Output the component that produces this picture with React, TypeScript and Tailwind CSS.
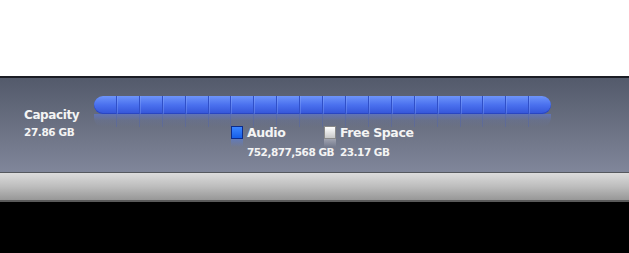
export default function App() {
  const segments = Array.from({ length: 20 }, (_, i) => i);

  return (
    <div className="w-[629px] h-[253px] bg-black flex flex-col font-['DejaVu_Sans',sans-serif]">
      {/* top white area */}
      <div className="h-[76px] bg-white" />

      {/* capacity panel */}
      <div className="h-[96px] border-t-2 border-[#1b1d24] bg-gradient-to-b from-[#535a6b] via-[#6a7082] to-[#80869a] flex pl-[24px]">
        <div className="w-[70px] pt-[30px] text-[#f4f4f4] font-bold">
          <div className="text-[12px] leading-[14px] tracking-[-0.4px]">Capacity</div>
          <div className="text-[10.5px] leading-[13px] mt-[4px] tracking-[-0.4px]">27.86 GB</div>
        </div>

        <div className="w-[457px] pt-[18px] flex flex-col">
          {/* bar */}
          <div className="h-[18px] rounded-full overflow-hidden flex bg-gradient-to-b from-[#6e94fa] via-[#4a70ee] to-[#3454d8] shadow-[inset_0_-1px_0_#2a46c0]">
            {segments.map((i) => (
              <div
                key={i}
                className={
                  i < 19
                    ? "flex-1 border-r border-[#3050c8] shadow-[1px_0_0_rgba(150,180,255,0.3)]"
                    : "flex-1"
                }
              />
            ))}
          </div>

          {/* reflection */}
          <div className="h-[13px] rounded-b-[9px] overflow-hidden flex bg-gradient-to-b from-[#6078d0]/70 via-[#6a78a8]/25 to-transparent">
            {segments.map((i) => (
              <div
                key={i}
                className={i < 19 ? "flex-1 border-r border-[#4a60b8]/35" : "flex-1"}
              />
            ))}
          </div>

          {/* legend */}
          <div className="flex ml-[137px] -mt-[1px] text-[#f4f4f4] font-bold">
            <div className="flex w-[93px]">
              <div className="flex flex-col mr-[4px]">
                <div className="w-[12px] h-[13px] border border-[#0c2c8c] bg-gradient-to-b from-[#3d86ff] to-[#155ee8]" />
                <div className="w-[12px] h-[8px] bg-gradient-to-b from-[#5a7ed8]/60 to-transparent" />
              </div>
              <div className="whitespace-nowrap">
                <div className="text-[12.5px] leading-[14px] tracking-[-0.4px]">Audio</div>
                <div className="text-[10.5px] leading-[13px] mt-[6px] tracking-[-0.5px]">752,877,568 GB</div>
              </div>
            </div>
            <div className="flex">
              <div className="flex flex-col mr-[4px]">
                <div className="w-[12px] h-[13px] border border-[#8a8a8a] bg-gradient-to-b from-[#ffffff] to-[#c8c8c8]" />
                <div className="w-[12px] h-[8px] bg-gradient-to-b from-[#d0d0d8]/50 to-transparent" />
              </div>
              <div className="whitespace-nowrap">
                <div className="text-[12.5px] leading-[14px] tracking-[-0.4px]">Free Space</div>
                <div className="text-[10.5px] leading-[13px] mt-[6px] tracking-[-0.5px]">23.17 GB</div>
              </div>
            </div>
          </div>
        </div>
      </div>

      {/* silver strip */}
      <div className="h-[30px] border-t border-[#55585e] border-b-2 border-b-[#5a5a5a] bg-gradient-to-b from-[#dcdcdc] via-[#bdbdbd] to-[#979797]" />
    </div>
  );
}
